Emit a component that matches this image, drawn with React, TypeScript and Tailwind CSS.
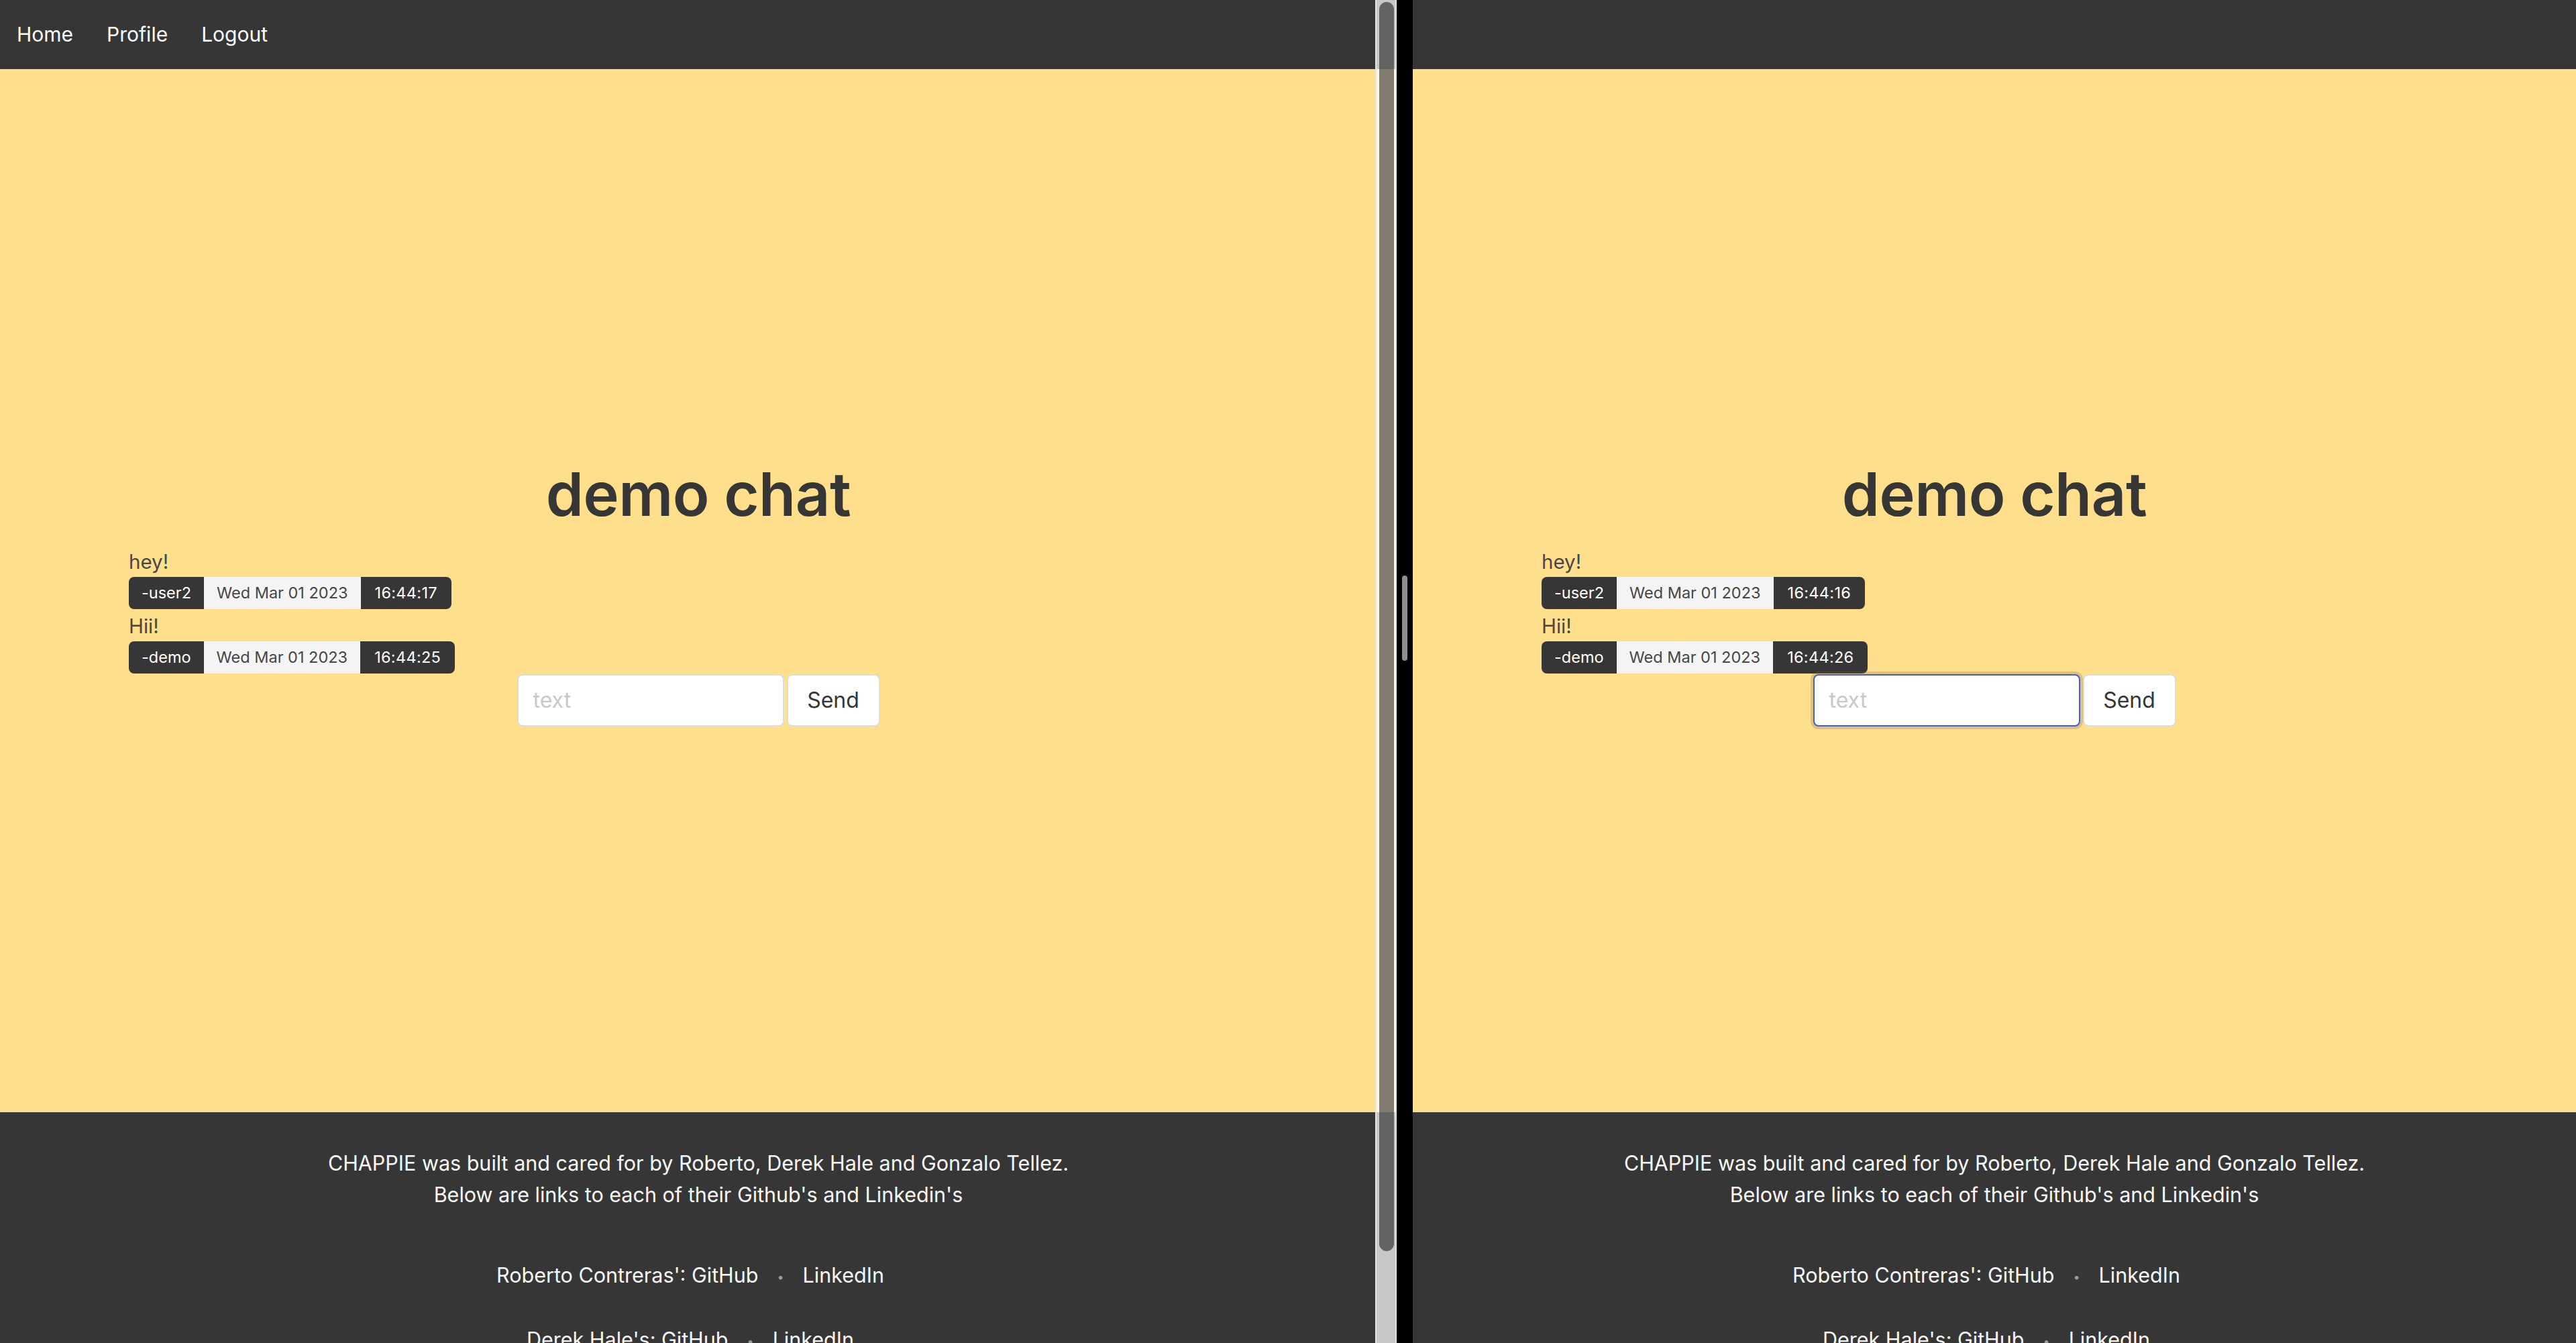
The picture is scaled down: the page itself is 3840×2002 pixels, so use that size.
import React from "react";

type Msg = { text: string; user: string; date: string; time: string };

function Nav({ links }: { links: boolean }) {
  return (
    <div className="h-[103px] shrink-0 bg-[#363636] flex items-center pl-[25px] gap-[50px] text-[30px] text-white">
      {links && (
        <>
          <span>Home</span>
          <span>Profile</span>
          <span>Logout</span>
        </>
      )}
    </div>
  );
}

function Badge({ m }: { m: Msg }) {
  return (
    <div className="inline-flex h-[48px] rounded-[8px] overflow-hidden text-[23.5px] leading-none">
      <span className="bg-[#363636] text-white px-[19px] flex items-center">{m.user}</span>
      <span className="bg-[#f4f4f4] text-[#464646] px-[19px] flex items-center">{m.date}</span>
      <span className="bg-[#363636] text-white px-[21px] flex items-center tracking-[0.3px]">{m.time}</span>
    </div>
  );
}

function FooterBlock() {
  return (
    <div className="flex-1 bg-[#363636] text-[#f7f7f7] text-[30.5px] leading-[47px] text-center pt-[52px] overflow-hidden">
      <div>CHAPPIE was built and cared for by Roberto, Derek Hale and Gonzalo Tellez.</div>
      <div>Below are links to each of their Github's and Linkedin's</div>
      <div className="mt-[73px] pr-[24px]">
        <span>Roberto Contreras': GitHub</span>
        <span className="mx-[28px] text-[#9a9a9a] text-[18px] align-middle">•</span>
        <span>LinkedIn</span>
      </div>
      <div className="mt-[46px] pr-[24px]">
        <span>Derek Hale's: GitHub</span>
        <span className="mx-[28px] text-[#9a9a9a] text-[18px] align-middle">•</span>
        <span>LinkedIn</span>
      </div>
    </div>
  );
}

function Pane({ msgs, focused, links }: { msgs: Msg[]; focused: boolean; links: boolean }) {
  return (
    <div className="flex flex-col h-full w-full">
      <Nav links={links} />
      <div className="h-[1555px] shrink-0 bg-[#ffdf8b] flex flex-col justify-center pt-[5px]">
        <h1 className="text-center text-[90px] leading-[108px] font-semibold text-[#363636] tracking-[-0.5px]">demo chat</h1>
        <div className="pl-[192px] mt-[23px] text-[#474747]">
          <div className="text-[29.5px] leading-[46px]">{msgs[0].text}</div>
          <Badge m={msgs[0]} />
          <div className="text-[29.5px] leading-[46px] mt-[2px]">{msgs[1].text}</div>
          <Badge m={msgs[1]} />
        </div>
        <div className="flex justify-center gap-[4px] mt-[1px]">
          <div
            className={
              focused
                ? "w-[398px] h-[78px] rounded-[8px] bg-white border-2 border-[#4a5cc7] shadow-[0_0_0_4px_rgba(110,100,100,0.25)] flex items-center pl-[22px] text-[32px] text-[#c9c9c9]"
                : "w-[398px] h-[78px] rounded-[8px] bg-white border-2 border-[#dcdcdc] flex items-center pl-[22px] text-[32px] text-[#c9c9c9]"
            }
          >
            text
          </div>
          <div className="w-[139px] h-[78px] rounded-[8px] bg-white border-2 border-[#dcdcdc] flex items-center justify-center text-[32px] text-[#363636]">
            Send
          </div>
        </div>
      </div>
      <FooterBlock />
    </div>
  );
}

export default function App() {
  const left: Msg[] = [
    { text: "hey!", user: "-user2", date: "Wed Mar 01 2023", time: "16:44:17" },
    { text: "Hii!", user: "-demo", date: "Wed Mar 01 2023", time: "16:44:25" },
  ];
  const right: Msg[] = [
    { text: "hey!", user: "-user2", date: "Wed Mar 01 2023", time: "16:44:16" },
    { text: "Hii!", user: "-demo", date: "Wed Mar 01 2023", time: "16:44:26" },
  ];
  return (
    <div
      className="w-[3840px] h-[2002px] flex overflow-hidden"
      style={{ fontFamily: "Inter, 'Noto Sans', sans-serif" }}
    >
      <div className="w-[2082px] h-full relative shrink-0">
        <Pane msgs={left} focused={false} links={true} />
        {/* overlay scrollbar */}
        <div className="absolute top-0 right-0 w-[32px] h-full bg-[rgba(255,255,255,0.72)] border-l-2 border-r-2 border-[rgba(230,230,230,0.9)]">
          <div className="absolute left-[4px] top-[3px] w-[22px] h-[1862px] rounded-[11px] bg-[rgba(0,0,0,0.5)]" />
        </div>
      </div>
      <div className="w-[24px] h-full bg-black shrink-0 flex items-start justify-center">
        <div className="mt-[858px] w-[8px] h-[127px] rounded-[4px] bg-[#8e8e8e]" />
      </div>
      <div className="flex-1 h-full">
        <Pane msgs={right} focused={true} links={false} />
      </div>
    </div>
  );
}
